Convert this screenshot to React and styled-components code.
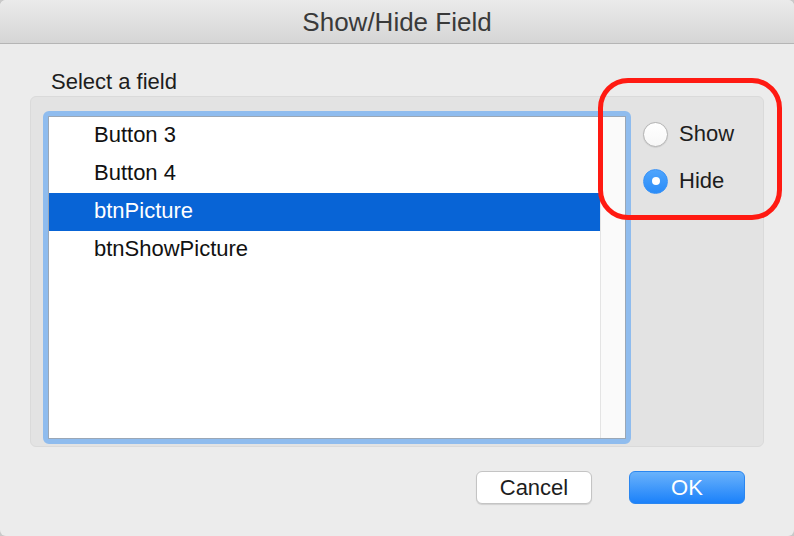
import React, { useState } from 'react';
import styled, { createGlobalStyle } from 'styled-components';

const GlobalStyle = createGlobalStyle`
  html, body {
    margin: 0;
    padding: 0;
    background: #c9c9c9;
  }
  * {
    box-sizing: border-box;
  }
`;

const Window = styled.div`
  position: relative;
  width: 794px;
  height: 536px;
  background: #ececec;
  border-radius: 6px;
  overflow: hidden;
  font-family: "Liberation Sans", Arial, sans-serif;
  color: #1d1d1d;
  display: flex;
  flex-direction: column;
`;

const TitleBar = styled.div`
  height: 44px;
  flex-shrink: 0;
  display: flex;
  align-items: center;
  justify-content: center;
  background: linear-gradient(#ebebeb, #d5d5d5);
  border-bottom: 1px solid #b5b5b5;
  font-size: 26px;
  color: #3a3a3a;
  padding-top: 1px;
`;

const Body = styled.div`
  flex: 1;
  display: flex;
  flex-direction: column;
  padding: 26px 30px 0 30px;
`;

const Label = styled.div`
  font-size: 22px;
  margin-left: 21px;
  height: 26px;
  line-height: 24px;
`;

const GroupBox = styled.div`
  height: 351px;
  display: flex;
  align-items: flex-start;
  gap: 12px;
  padding: 14px 0 0 12px;
  background: #e3e3e3;
  border: 1px solid #dadada;
  border-radius: 6px;
`;

const ListFrame = styled.div`
  width: 588px;
  height: 333px;
  border: 5px solid #8fbcee;
  border-radius: 6px;
  background: #8fbcee;
  display: flex;
`;

const ListInner = styled.div`
  flex: 1;
  display: flex;
  background: #fff;
  border: 1px solid #9aa7b6;
`;

const Rows = styled.div`
  flex: 1;
  display: flex;
  flex-direction: column;
`;

const Row = styled.div`
  height: 38px;
  display: flex;
  align-items: center;
  padding-left: 45px;
  padding-bottom: 3px;
  font-size: 22px;
  background: ${p => (p.$selected ? '#0864d6' : 'transparent')};
  color: ${p => (p.$selected ? '#ffffff' : '#111')};
`;

const ScrollTrack = styled.div`
  width: 25px;
  background: #fafafa;
  border-left: 1px solid #e4e4e4;
`;

const RadioGroup = styled.div`
  display: flex;
  flex-direction: column;
  gap: 21px;
  padding-top: 10px;
`;

const RadioRow = styled.label`
  display: flex;
  align-items: center;
  gap: 11px;
  font-size: 22px;
  color: #1d1d1d;
  cursor: default;
`;

const RadioCircle = styled.span`
  width: 25px;
  height: 25px;
  border-radius: 50%;
  display: flex;
  align-items: center;
  justify-content: center;
  background: ${p => (p.$checked ? 'linear-gradient(#4ea5fd, #2b8cf8)' : 'linear-gradient(#ffffff, #f7f7f7)')};
  border: 1px solid ${p => (p.$checked ? '#3a93f7' : '#b4b4b4')};
  box-shadow: ${p => (p.$checked ? 'none' : '0 0.5px 1px rgba(0,0,0,0.15)')};

  &::after {
    content: '';
    display: ${p => (p.$checked ? 'block' : 'none')};
    width: 8px;
    height: 8px;
    border-radius: 50%;
    background: #fff;
  }
`;

const ButtonBar = styled.div`
  display: flex;
  justify-content: flex-end;
  gap: 37px;
  padding-top: 24px;
  padding-right: 19px;
`;

const Button = styled.button`
  width: 116px;
  height: 33px;
  border-radius: 6px;
  font-family: "Liberation Sans", Arial, sans-serif;
  font-size: 22px;
  padding: 0;
  display: flex;
  align-items: center;
  justify-content: center;
  cursor: default;
  ${p =>
    p.$primary
      ? `
    background: linear-gradient(#6ab2fb, #1b81fa);
    border: 1px solid #2a86f0;
    color: #fff;
  `
      : `
    background: #fff;
    border: 1px solid #c4c4c4;
    box-shadow: 0 1px 1px rgba(0,0,0,0.12);
    color: #1d1d1d;
  `}
`;

const Highlight = styled.div`
  position: absolute;
  left: 598px;
  top: 78px;
  width: 184px;
  height: 142px;
  border: 5px solid #ff1a12;
  border-radius: 30px;
  pointer-events: none;
`;

const fields = ['Button 3', 'Button 4', 'btnPicture', 'btnShowPicture'];

export default function App() {
  const [selected, setSelected] = useState('btnPicture');
  const [mode, setMode] = useState('hide');

  return (
    <>
      <GlobalStyle />
      <Window>
        <TitleBar>Show/Hide Field</TitleBar>
        <Body>
          <Label>Select a field</Label>
          <GroupBox>
            <ListFrame>
              <ListInner>
                <Rows>
                  {fields.map(f => (
                    <Row key={f} $selected={f === selected} onClick={() => setSelected(f)}>
                      {f}
                    </Row>
                  ))}
                </Rows>
                <ScrollTrack />
              </ListInner>
            </ListFrame>
            <RadioGroup>
              <RadioRow onClick={() => setMode('show')}>
                <RadioCircle $checked={mode === 'show'} />
                Show
              </RadioRow>
              <RadioRow onClick={() => setMode('hide')}>
                <RadioCircle $checked={mode === 'hide'} />
                Hide
              </RadioRow>
            </RadioGroup>
          </GroupBox>
          <ButtonBar>
            <Button>Cancel</Button>
            <Button $primary>OK</Button>
          </ButtonBar>
        </Body>
        <Highlight />
      </Window>
    </>
  );
}
